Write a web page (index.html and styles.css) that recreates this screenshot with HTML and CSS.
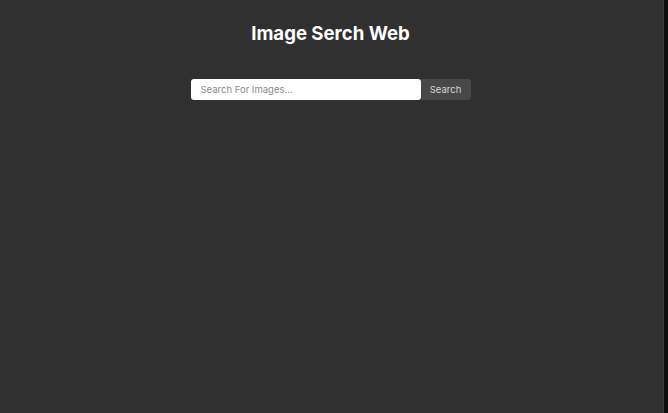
FILE: index.html
```html
<!DOCTYPE html>
<html lang="en">
<head>
<meta charset="utf-8">
<title>Image Serch Web</title>
<link rel="stylesheet" href="styles.css">
</head>
<body>
<div class="page">
  <main class="main">
    <h1 class="title">Image Serch Web</h1>
    <form class="search">
      <input class="search-input" type="text" placeholder="Search For Images...">
      <button class="search-btn" type="button">Search</button>
    </form>
  </main>
  <div class="edge"></div>
</div>
</body>
</html>
```
FILE: styles.css
```css
html, body {
  margin: 0;
  padding: 0;
  height: 100%;
}
body {
  background: #303030;
  font-family: Inter, "Liberation Sans", sans-serif;
}
.page {
  display: flex;
  height: 100%;
}
.main {
  flex: 1;
  display: flex;
  flex-direction: column;
  align-items: center;
  padding-right: 2px;
}
.edge {
  width: 4px;
  background: #0c0c0c;
  border-left: 1px solid #3a3a3a;
}
.title {
  margin: 21px 0 0;
  font-size: 18.6px;
  font-weight: 700;
  color: #ffffff;
  line-height: 24px;
}
.search {
  display: flex;
  margin-top: 34px;
}
.search-input {
  width: 230px;
  height: 21px;
  box-sizing: border-box;
  border: none;
  border-radius: 3px;
  padding: 0 10px;
  font-family: Inter, "Liberation Sans", sans-serif;
  font-size: 9.5px;
  color: #333;
  background: #fff;
  outline: none;
}
.search-input::placeholder {
  color: #8a8a8a;
}
.search-btn {
  height: 21px;
  width: 50px;
  border: none;
  border-radius: 0 3px 3px 0;
  background: #484848;
  color: #d6d6d6;
  font-family: Inter, "Liberation Sans", sans-serif;
  font-size: 9.5px;
  padding: 0;
}
```
